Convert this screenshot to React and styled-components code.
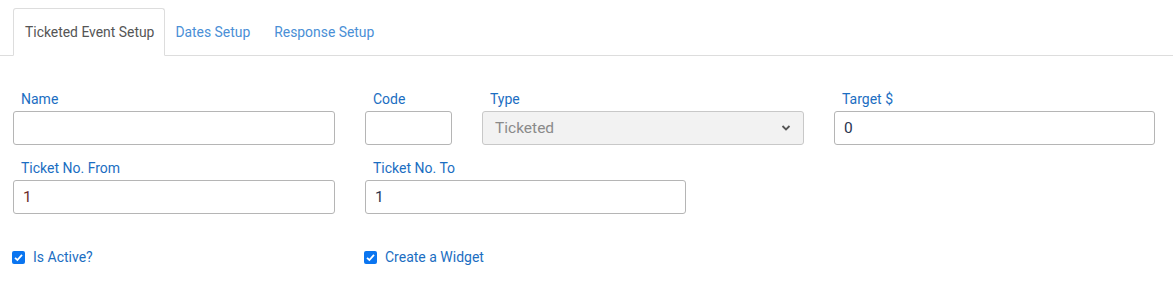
import React from "react";
import styled, { createGlobalStyle } from "styled-components";

const GlobalStyle = createGlobalStyle`
  body {
    margin: 0;
    background: #fff;
    font-family: Roboto, "Liberation Sans", Arial, sans-serif;
  }
`;

const Page = styled.div`
  width: 1173px;
  height: 283px;
  padding-top: 8px;
  box-sizing: border-box;
`;

const Tabs = styled.ul`
  display: flex;
  list-style: none;
  margin: 0;
  padding: 0 0 0 13px;
  border-bottom: 1px solid #ddd;
`;

const Tab = styled.li`
  height: 45px;
  display: flex;
  align-items: center;
  padding: ${p => (p.$active ? "0 10px 1px 11px" : "0 13px 1px 9px")};
  font-size: 13.9px;
  margin-bottom: -1px;
  color: ${p => (p.$active ? "#555" : "#4a8fd6")};
  background: ${p => (p.$active ? "#fff" : "transparent")};
  border: 1px solid ${p => (p.$active ? "#ddd" : "transparent")};
  border-bottom-color: ${p => (p.$active ? "#fff" : "transparent")};
  border-radius: 3px 3px 0 0;
`;

const Form = styled.div`
  padding: 35px 0 0 13px;
  display: grid;
  grid-template-columns: 322px 87px 322px 321px;
  column-gap: 30px;
`;

const Field = styled.div`
  display: flex;
  flex-direction: column;
  grid-column: ${p => p.$span || "auto"};
  width: ${p => p.$width || "auto"};
  margin-bottom: 15px;
`;

const Label = styled.label`
  font-size: 14px;
  color: #1b6ec2;
  padding-left: 8px;
  line-height: 17px;
  margin-bottom: 3px;
`;

const Input = styled.input`
  height: 34px;
  box-sizing: border-box;
  border: 1px solid #b5b5b5;
  border-radius: 3px;
  padding: 0 9px;
  font-family: inherit;
  font-size: 15.5px;
  color: ${p => p.$tone || "#333"};
  outline: none;
`;

const SelectBox = styled.div`
  height: 34px;
  box-sizing: border-box;
  border: 1px solid #c8c8c8;
  border-radius: 3px;
  background: #f2f2f2;
  display: flex;
  align-items: center;
  justify-content: space-between;
  padding: 0 12px;
  font-size: 15.5px;
  color: #8a8a8a;
`;

const Checks = styled.div`
  grid-column: 1 / -1;
  display: grid;
  grid-template-columns: 352px auto;
  margin-top: 20px;
`;

const Check = styled.label`
  display: flex;
  align-items: center;
  gap: 8px;
  font-size: 14px;
  color: #1b6ec2;
  margin-left: -1px;
`;

const Box = styled.span`
  width: 13px;
  height: 13px;
  border-radius: 2px;
  background: #0a75f0;
  display: flex;
  align-items: center;
  justify-content: center;
`;

const Tick = () => (
  <Box>
    <svg width="11" height="11" viewBox="0 0 11 11">
      <path d="M2 5.8 L4.4 8 L9 2.8" fill="none" stroke="#fff" strokeWidth="1.8" />
    </svg>
  </Box>
);

const Chevron = () => (
  <svg width="10" height="8" viewBox="0 0 10 8">
    <path d="M1.5 2 L5 5.5 L8.5 2" fill="none" stroke="#555" strokeWidth="1.8" />
  </svg>
);

export default function App() {
  return (
    <Page>
      <GlobalStyle />
      <Tabs>
        <Tab $active>Ticketed Event Setup</Tab>
        <Tab>Dates Setup</Tab>
        <Tab>Response Setup</Tab>
      </Tabs>
      <Form>
        <Field>
          <Label>Name</Label>
          <Input />
        </Field>
        <Field>
          <Label>Code</Label>
          <Input />
        </Field>
        <Field>
          <Label>Type</Label>
          <SelectBox>
            Ticketed
            <Chevron />
          </SelectBox>
        </Field>
        <Field>
          <Label>Target $</Label>
          <Input defaultValue="0" $tone="#2a3550" />
        </Field>
        <Field>
          <Label>Ticket No. From</Label>
          <Input defaultValue="1" $tone="#6b2a2a" />
        </Field>
        <Field $span="2 / 4" $width="321px">
          <Label>Ticket No. To</Label>
          <Input defaultValue="1" $tone="#2a3550" />
        </Field>
        <Checks>
          <Check>
            <Tick />
            Is Active?
          </Check>
          <Check>
            <Tick />
            Create a Widget
          </Check>
        </Checks>
      </Form>
    </Page>
  );
}
